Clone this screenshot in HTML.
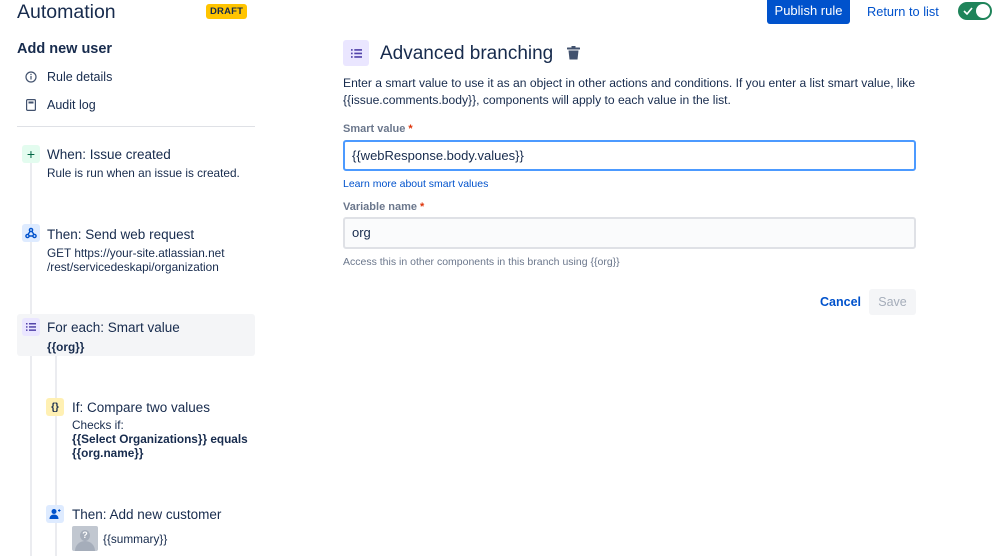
<!DOCTYPE html>
<html><head><meta charset="utf-8"><style>
*{margin:0;padding:0;box-sizing:border-box}
body{width:999px;height:556px;overflow:hidden;background:#fff;font-family:"Liberation Sans",sans-serif;color:#172b4d;position:relative}
.a{position:absolute;white-space:nowrap}
.ic{position:absolute;width:18px;height:18px;border-radius:3px;display:flex;align-items:center;justify-content:center;font-size:11px}
.t{font-size:13.5px}
.s{font-size:11.8px}
.b{font-weight:bold}
</style></head><body>
<div class="a" style="left:17px;top:1px;font-size:19.5px">Automation</div>
<div class="a b" style="left:206px;top:4px;background:#ffc400;color:#172b4d;font-size:9.5px;padding:2px 4px;border-radius:3px;letter-spacing:.2px">DRAFT</div>
<div class="a b" style="left:17px;top:41px;font-size:14.5px">Add new user</div>
<svg class="a" style="left:25px;top:71px" width="12" height="12" viewBox="0 0 12 12"><circle cx="6" cy="6" r="5" fill="none" stroke="#42526e" stroke-width="1.2"/><rect x="5.4" y="5" width="1.2" height="3.5" fill="#42526e"/><circle cx="6" cy="3.5" r=".7" fill="#42526e"/></svg>
<div class="a t" style="left:47px;top:70px;font-size:12.5px">Rule details</div>
<svg class="a" style="left:26px;top:99px" width="10" height="12" viewBox="0 0 10 12"><rect x=".6" y=".6" width="8.8" height="10.8" rx="1" fill="none" stroke="#42526e" stroke-width="1.2"/><rect x="2.5" y="2.5" width="5" height="2" fill="#42526e"/></svg>
<div class="a t" style="left:47px;top:98px;font-size:12.5px">Audit log</div>
<div class="a" style="left:17px;top:126px;width:238px;height:1px;background:#dfe1e6"></div>
<div class="a" style="left:30px;top:160px;width:2px;height:396px;background:#ebecf0"></div>
<div class="a" style="left:17px;top:314px;width:238px;height:42px;background:#f4f5f7;border-radius:3px"></div>
<div class="a" style="left:55px;top:356px;width:2px;height:200px;background:#ebecf0"></div>

<div class="ic" style="left:22px;top:145px;background:#e3fcef;color:#006644;font-size:14px">+</div>
<div class="a t" style="left:47px;top:147px">When: Issue created</div>
<div class="a s" style="left:47px;top:166px">Rule is run when an issue is created.</div>

<div class="ic" style="left:22px;top:224px;background:#deebff"><svg width="12" height="12" viewBox="0 0 12 12" fill="none" stroke="#0052cc" stroke-width="1.4"><circle cx="6" cy="3" r="1.6"/><circle cx="2.5" cy="9" r="1.6"/><circle cx="9.5" cy="9" r="1.6"/><path d="M5 4.5L3 7.5M7 4.5L9 7.5M4 9h4"/></svg></div>
<div class="a t" style="left:47px;top:227px">Then: Send web request</div>
<div class="a s" style="left:47px;top:246px">GET https://your-site.atlassian.net</div>
<div class="a s" style="left:47px;top:260px">/rest/servicedeskapi/organization</div>

<div class="ic" style="left:22px;top:318px;background:#eae6ff"><svg width="10" height="8" viewBox="0 0 10 8" fill="#5243aa"><rect x="0" y="0" width="1.5" height="1.5"/><rect x="3" y="0" width="7" height="1.5"/><rect x="0" y="3.2" width="1.5" height="1.5"/><rect x="3" y="3.2" width="7" height="1.5"/><rect x="0" y="6.4" width="1.5" height="1.5"/><rect x="3" y="6.4" width="7" height="1.5"/></svg></div>
<div class="a t" style="left:47px;top:320px">For each: Smart value</div>
<div class="a s b" style="left:47px;top:340px">{{org}}</div>

<div class="ic b" style="left:46px;top:398px;background:#fff0b3;color:#172b4d;font-size:10px">{}</div>
<div class="a t" style="left:72px;top:400px">If: Compare two values</div>
<div class="a s" style="left:72px;top:418px">Checks if:</div>
<div class="a s b" style="left:72px;top:432px">{{Select Organizations}} equals</div>
<div class="a s b" style="left:72px;top:446px">{{org.name}}</div>

<div class="ic" style="left:46px;top:505px;background:#deebff"><svg width="12" height="12" viewBox="0 0 12 12" fill="#0052cc"><circle cx="5" cy="3.5" r="2.5"/><path d="M0.5 11c0-3 2-4.5 4.5-4.5S9.5 8 9.5 11z"/><path d="M9 2.5h2.5M10.25 1.25v2.5" stroke="#0052cc" stroke-width="1"/></svg></div>
<div class="a t" style="left:72px;top:507px">Then: Add new customer</div>
<div class="a" style="left:72px;top:526px;width:26px;height:25px;background:#c1c7d0;border-radius:2px;overflow:hidden"><div style="position:absolute;left:8px;top:4px;width:10px;height:11px;border-radius:50%;background:#a5adba;color:#fff;font-size:9px;text-align:center;line-height:11px;font-weight:bold">?</div><div style="position:absolute;left:3px;top:15px;width:20px;height:14px;border-radius:10px 10px 0 0;background:#a5adba"></div></div>
<div class="a s" style="left:103px;top:532px">{{summary}}</div>

<div class="a" style="left:767px;top:0;width:83px;height:24px;background:#0052cc;color:#fff;border-radius:0 0 3px 3px;font-size:13px;line-height:22px;text-align:center;font-weight:500">Publish rule</div>
<div class="a" style="left:867px;top:4px;color:#0052cc;font-size:12.8px">Return to list</div>
<div class="a" style="left:958px;top:2px;width:34px;height:18px;background:#1f845a;border-radius:9px"><svg style="position:absolute;left:5px;top:5px" width="10" height="8" viewBox="0 0 10 8"><path d="M1 4l3 3 5-6" fill="none" stroke="#fff" stroke-width="1.6"/></svg><div style="position:absolute;right:2px;top:2px;width:14px;height:14px;border-radius:50%;background:#fff"></div></div>

<div class="ic" style="left:343px;top:40px;width:26px;height:26px;background:#eae6ff"><svg width="11" height="9" viewBox="0 0 10 8" fill="#5243aa"><rect x="0" y="0" width="1.5" height="1.5"/><rect x="3" y="0" width="7" height="1.5"/><rect x="0" y="3.2" width="1.5" height="1.5"/><rect x="3" y="3.2" width="7" height="1.5"/><rect x="0" y="6.4" width="1.5" height="1.5"/><rect x="3" y="6.4" width="7" height="1.5"/></svg></div>
<div class="a" style="left:380px;top:43px;font-size:19px">Advanced branching</div>
<svg class="a" style="left:567px;top:46px" width="13" height="14" viewBox="0 0 13 14" fill="#42526e"><rect x="0" y="1.5" width="13" height="2" rx=".5"/><rect x="4.5" y="0" width="4" height="2"/><path d="M1.5 4.5h10l-1 9h-8z"/></svg>
<div class="a" style="left:343px;top:76px;font-size:12.1px">Enter a smart value to use it as an object in other actions and conditions. If you enter a list smart value, like</div>
<div class="a" style="left:343px;top:93px;font-size:12.1px">{{issue.comments.body}}, components will apply to each value in the list.</div>
<div class="a b" style="left:343px;top:123px;font-size:11px;color:#6b778c">Smart value <span style="color:#de350b">*</span></div>
<div class="a" style="left:343px;top:140px;width:573px;height:31px;border:2px solid #4c9aff;border-radius:3px;font-size:13px;padding-left:7px;line-height:27px">{{webResponse.body.values}}</div>
<div class="a" style="left:343px;top:178px;font-size:10.5px;color:#0052cc">Learn more about smart values</div>
<div class="a b" style="left:343px;top:201px;font-size:11px;color:#6b778c">Variable name <span style="color:#de350b">*</span></div>
<div class="a" style="left:343px;top:217px;width:573px;height:32px;border:2px solid #dfe1e6;background:#fafbfc;border-radius:3px;font-size:13px;padding-left:7px;line-height:28px">org</div>
<div class="a" style="left:343px;top:256px;font-size:10.5px;color:#6b778c">Access this in other components in this branch using {{org}}</div>
<div class="a b" style="left:820px;top:295px;font-size:12.5px;color:#0052cc">Cancel</div>
<div class="a" style="left:869px;top:289px;width:47px;height:26px;background:#f4f5f7;border-radius:3px;color:#a5adba;font-size:12.5px;text-align:center;line-height:26px">Save</div>
</body></html>
